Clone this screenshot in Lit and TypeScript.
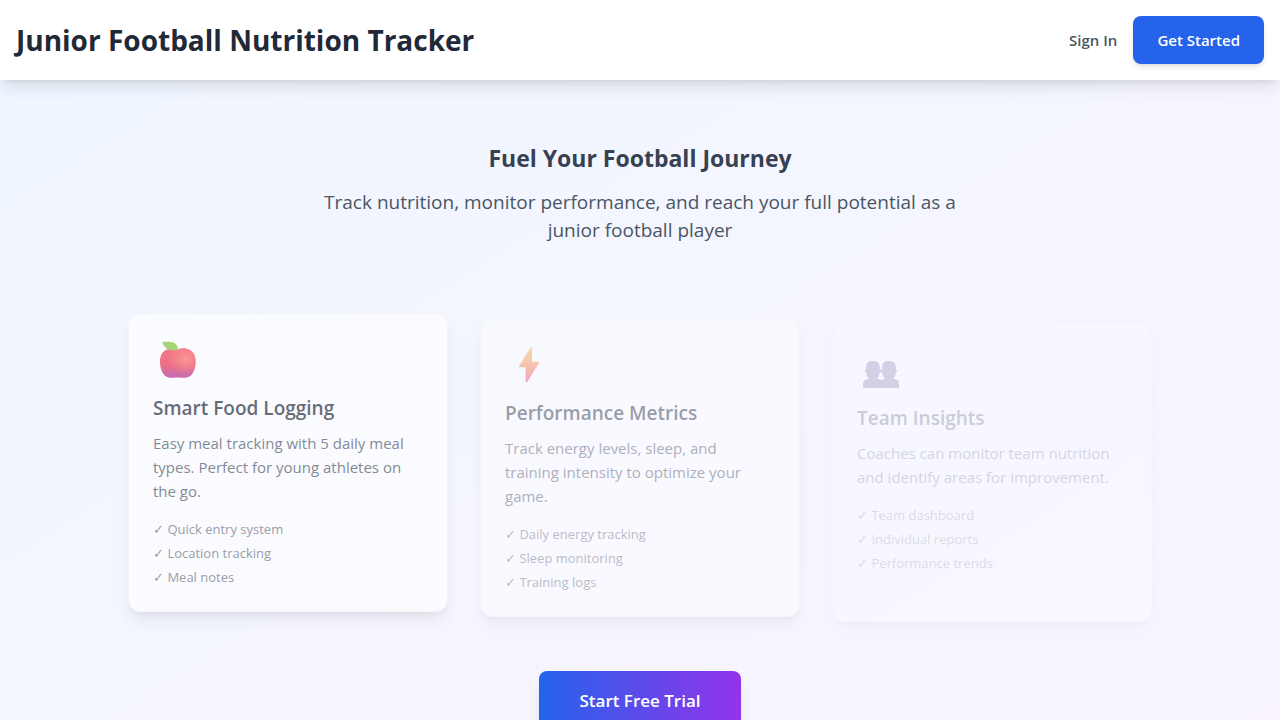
import { LitElement, html, css, svg } from "lit";
import { customElement, property } from "lit/decorators.js";

type IconName = "apple" | "bolt" | "people";

interface Feature {
  icon: IconName;
  title: string;
  text: string;
  points: string[];
  opacity: number;
  shift: number;
}

const FEATURES: Feature[] = [
  {
    icon: "apple",
    title: "Smart Food Logging",
    text: "Easy meal tracking with 5 daily meal types. Perfect for young athletes on the go.",
    points: ["Quick entry system", "Location tracking", "Meal notes"],
    opacity: 0.67,
    shift: 5,
  },
  {
    icon: "bolt",
    title: "Performance Metrics",
    text: "Track energy levels, sleep, and training intensity to optimize your game.",
    points: ["Daily energy tracking", "Sleep monitoring", "Training logs"],
    opacity: 0.43,
    shift: 10,
  },
  {
    icon: "people",
    title: "Team Insights",
    text: "Coaches can monitor team nutrition and identify areas for improvement.",
    points: ["Team dashboard", "Individual reports", "Performance trends"],
    opacity: 0.2,
    shift: 15,
  },
];

const ICONS = {
  apple: svg`
    <defs>
      <linearGradient id="skin" x1="0" y1="0" x2="0" y2="1">
        <stop offset="0" stop-color="#f8394e" />
        <stop offset="0.55" stop-color="#ea2f4f" />
        <stop offset="1" stop-color="#b02a8c" />
      </linearGradient>
      <radialGradient id="shine" cx="0.72" cy="0.36" r="0.5">
        <stop offset="0" stop-color="#ff6a62" />
        <stop offset="1" stop-color="#ff5a5a" stop-opacity="0" />
      </radialGradient>
    </defs>
    <path fill="url(#skin)" d="M24.800 10.800C21.500 9 17.500 9 14.500 10.200C9.500 12 7 16 7 22.500C7 31 10.500 38.800 18 38.800C21 38.800 22 38.400 24.800 38.400C27.600 38.400 28.600 38.800 31.600 38.800C39.100 38.800 42.600 31 42.600 22.500C42.600 16 40.100 12 35.100 10.200C32.100 9 28.100 9 24.800 10.800Z" />
    <path fill="url(#shine)" d="M24.800 10.800C21.500 9 17.500 9 14.500 10.200C9.500 12 7 16 7 22.500C7 31 10.500 38.800 18 38.800C21 38.800 22 38.400 24.800 38.400C27.600 38.400 28.600 38.800 31.600 38.800C39.100 38.800 42.600 31 42.600 22.500C42.600 16 40.100 12 35.100 10.200C32.100 9 28.100 9 24.800 10.800Z" />
    <path fill="#82c434" d="M9.500 3.700C9.500 3 10 2.800 10.700 2.800H16C21.500 2.800 25.200 6 25.200 11C19.500 12 15.500 11.200 13 9C11 7.300 9.700 5.700 9.500 3.700Z" />`,
  bolt: svg`
    <defs>
      <linearGradient id="spark" x1="0" y1="0" x2="0" y2="1">
        <stop offset="0" stop-color="#fcb03c" />
        <stop offset="0.45" stop-color="#fb8a45" />
        <stop offset="1" stop-color="#f43a5e" />
      </linearGradient>
    </defs>
    <path fill="url(#spark)" d="M25.600 3.500C26 2.700 27 2.900 27 3.800V17.800H33.400C34 17.800 34.300 18.400 34 18.900L22.600 37.400C22 38.300 20.600 38.100 20.600 37V23.200H14.500C13.900 23.200 13.700 22.700 14 22.200Z" />`,
  people: svg`
    <g fill="#5c3a86">
      <path d="M6 34.500C6 31.500 8 30 12 29.700L20 29.700C22 29.900 23.500 30.500 24.500 31.300C25.500 30.500 27 29.900 28.500 29.700L36.500 29.700C40 30 42 31.500 42 34.500V38.500C42 39.200 41.700 39.500 41 39.500H7C6.300 39.500 6 39.200 6 38.500Z" />
      <path d="M16 12C20.500 12 22.700 14 22.700 17.500V20.300H25.300V17.500C25.300 14 27.500 12 32 12C36.500 12 38.800 14 38.800 17.500V20.300C40.300 20.300 40.300 23.500 38.800 23.500C38.600 26.500 37.500 28.800 35.500 30H28.500C26.500 28.800 25.500 26.500 25.300 23.300H22.700C22.500 26.500 21.500 28.800 19.500 30H12.500C10.500 28.800 9.400 26.500 9.200 23.500C7.700 23.500 7.700 20.300 9.200 20.300V17.500C9.200 14 11.500 12 16 12Z" />
    </g>`,
};

@customElement("feature-card")
class FeatureCard extends LitElement {
  @property({ attribute: false }) feature!: Feature;

  static styles = css`
    :host {
      display: block;
    }
    .card {
      box-sizing: border-box;
      height: 100%;
      padding: 24px;
      background: #fff;
      border: 1px solid #f3f4f6;
      border-radius: 12px;
      box-shadow: 0 10px 15px -3px rgb(0 0 0 / 0.1), 0 4px 6px -4px rgb(0 0 0 / 0.1);
    }
    .icon {
      display: block;
      width: 50px;
      height: 40px;
      margin-bottom: 16px;
    }
    .title {
      margin: 0 0 9px;
      font-size: 19px;
      line-height: 28px;
      font-weight: 600;
      color: #1f2937;
    }
    .text {
      margin: 0 0 16px;
      padding-right: 8px;
      font-size: 15px;
      line-height: 24px;
      color: #4b5563;
    }
    .points {
      display: grid;
      gap: 4px;
      margin: 0;
      padding: 0;
      list-style: none;
      font-size: 13px;
      line-height: 20px;
      color: #6b7280;
    }
  `;

  render() {
    const f = this.feature;
    return html`
      <article
        class="card"
        style="opacity:${f.opacity};transform:translateY(${f.shift}px)"
      >
        <svg class="icon" viewBox="0 -1 50 40" aria-hidden="true">${ICONS[f.icon]}</svg>
        <h3 class="title">${f.title}</h3>
        <p class="text">${f.text}</p>
        <ul class="points">
          ${f.points.map((p) => html`<li>✓ ${p}</li>`)}
        </ul>
      </article>
    `;
  }
}

@customElement("app-root")
class AppRoot extends LitElement {
  static styles = css`
    :host {
      display: block;
      min-height: 100vh;
      font-family: "Segoe UI", "Open Sans", "Noto Sans", sans-serif;
      background: linear-gradient(to bottom right, #eff6ff, #faf5ff);
    }
    .header {
      position: relative;
      display: flex;
      align-items: center;
      justify-content: space-between;
      padding: 16px;
      background: #fff;
      box-shadow: 0 10px 15px -3px rgb(0 0 0 / 0.1), 0 4px 6px -4px rgb(0 0 0 / 0.1);
    }
    .brand {
      margin: 0;
      font-size: 28px;
      line-height: 36px;
      font-weight: 700;
      color: #1f2937;
    }
    .nav {
      display: flex;
      align-items: center;
      gap: 16px;
    }
    button {
      border: 0;
      font-family: inherit;
      cursor: pointer;
    }
    .sign-in {
      padding: 0;
      background: none;
      font-size: 15px;
      line-height: 24px;
      font-weight: 600;
      color: #4b5563;
    }
    .get-started {
      padding: 12px 24px;
      border-radius: 8px;
      background: #2563eb;
      box-shadow: 0 4px 6px -1px rgb(0 0 0 / 0.1), 0 2px 4px -2px rgb(0 0 0 / 0.1);
      font-size: 15px;
      line-height: 24px;
      font-weight: 600;
      color: #fff;
    }
    .main {
      max-width: 1024px;
      margin: 0 auto;
      padding: 64px 16px;
    }
    .hero {
      max-width: 640px;
      margin: 0 auto 64px;
      text-align: center;
    }
    .headline {
      margin: 0 0 16px;
      font-size: 23px;
      line-height: 28px;
      font-weight: 700;
      color: #374151;
    }
    .lead {
      margin: 0;
      font-size: 19px;
      line-height: 28px;
      color: #4b5563;
    }
    .features {
      display: grid;
      grid-template-columns: repeat(auto-fit, minmax(280px, 1fr));
      gap: 32px;
      margin-bottom: 64px;
    }
    .action {
      display: flex;
      justify-content: center;
    }
    .trial {
      padding: 16px 40px;
      border-radius: 8px;
      background: linear-gradient(to right, #2563eb, #9333ea);
      box-shadow: 0 10px 15px -3px rgb(0 0 0 / 0.1), 0 4px 6px -4px rgb(0 0 0 / 0.1);
      font-size: 17px;
      line-height: 28px;
      font-weight: 600;
      color: #fff;
    }
  `;

  render() {
    return html`
      <header class="header">
        <h1 class="brand">Junior Football Nutrition Tracker</h1>
        <nav class="nav">
          <button class="sign-in" type="button">Sign In</button>
          <button class="get-started" type="button">Get Started</button>
        </nav>
      </header>
      <main class="main">
        <section class="hero">
          <h2 class="headline">Fuel Your Football Journey</h2>
          <p class="lead">
            Track nutrition, monitor performance, and reach your full potential as a junior
            football player
          </p>
        </section>
        <section class="features">
          ${FEATURES.map((f) => html`<feature-card .feature=${f}></feature-card>`)}
        </section>
        <div class="action">
          <button class="trial" type="button">Start Free Trial</button>
        </div>
      </main>
    `;
  }
}
